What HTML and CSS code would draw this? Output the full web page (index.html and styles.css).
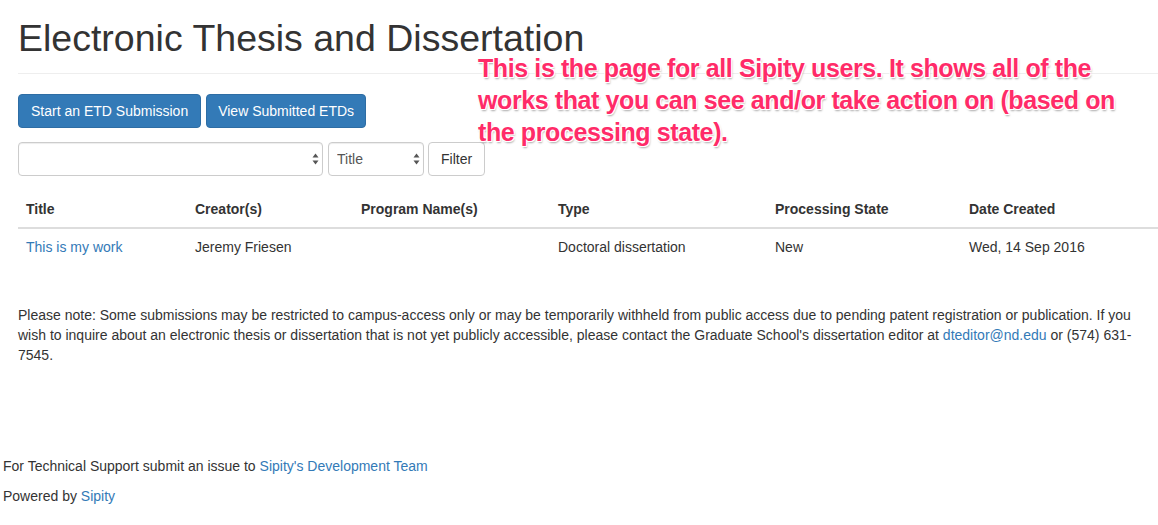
FILE: index.html
```html
<!DOCTYPE html>
<html lang="en">
<head>
<meta charset="utf-8">
<title>Electronic Thesis and Dissertation</title>
<link rel="stylesheet" href="styles.css">
</head>
<body>
<main class="container">
  <h1 class="page-title">Electronic Thesis and Dissertation</h1>
  <div class="actions">
    <a class="btn btn-primary" href="#">Start an ETD Submission</a>
    <a class="btn btn-primary btn-tight" href="#">View Submitted ETDs</a>
  </div>
  <form class="filter-form">
    <span class="select-wrap select-wide">
      <select class="form-control"><option></option></select>
      <svg class="select-arrows" width="7" height="12" viewBox="0 0 7 12"><path d="M3.5 0.5 L6.5 4.5 H0.5 Z M3.5 11.5 L6.5 7.5 H0.5 Z" fill="#555"/></svg>
    </span>
    <span class="select-wrap select-narrow">
      <select class="form-control"><option>Title</option></select>
      <svg class="select-arrows" width="7" height="12" viewBox="0 0 7 12"><path d="M3.5 0.5 L6.5 4.5 H0.5 Z M3.5 11.5 L6.5 7.5 H0.5 Z" fill="#555"/></svg>
    </span>
    <button type="button" class="btn btn-default">Filter</button>
  </form>
  <table class="table">
    <colgroup>
      <col class="c-title"><col class="c-creator"><col class="c-program"><col class="c-type"><col class="c-state"><col class="c-date">
    </colgroup>
    <thead>
      <tr><th>Title</th><th>Creator(s)</th><th>Program Name(s)</th><th>Type</th><th>Processing State</th><th>Date Created</th></tr>
    </thead>
    <tbody>
      <tr><td><a href="#">This is my work</a></td><td>Jeremy Friesen</td><td></td><td>Doctoral dissertation</td><td>New</td><td>Wed, 14 Sep 2016</td></tr>
    </tbody>
  </table>
  <p class="note">Please note: Some submissions may be restricted to campus-access only or may be temporarily withheld from public access due to pending patent registration or publication. If you wish to inquire about an electronic thesis or dissertation that is not yet publicly accessible, please contact the Graduate School's dissertation editor at <a href="#">dteditor@nd.edu</a> or (574) 631-7545.</p>
  <div class="annotation">This is the page for all Sipity users. It shows all of the works that you can see and/or take action on (based on the processing state).</div>
</main>
<footer class="footer">
  <p>For Technical Support submit an issue to <a href="#">Sipity's Development Team</a></p>
  <p>Powered by <a href="#">Sipity</a></p>
</footer>
</body>
</html>
```
FILE: styles.css
```css
* { box-sizing: border-box; }
html, body { margin: 0; padding: 0; }
body {
  font-family: "Liberation Sans", Arial, sans-serif;
  font-size: 14px;
  line-height: 20px;
  color: #333;
  background: #fff;
  width: 1158px;
  overflow: hidden;
}
a { color: #337ab7; text-decoration: none; }

.container {
  position: relative;
  padding: 0 0 0 18px;
}
.page-title {
  margin: 0;
  padding: 17px 0 14px;
  font-size: 37.5px;
  font-weight: 500;
  line-height: 42px;
  color: #333;
  border-bottom: 1px solid #eee;
}
.actions {
  display: flex;
  gap: 5px;
  margin-top: 20px;
}
.btn {
  display: inline-block;
  height: 34px;
  padding: 6px 12px;
  font-family: inherit;
  font-size: 14px;
  line-height: 20px;
  border: 1px solid transparent;
  border-radius: 4px;
  white-space: nowrap;
  cursor: pointer;
}
.btn-tight { padding: 6px 11px; }
.btn-primary {
  color: #fff;
  background: #337ab7;
  border-color: #2e6da4;
}
.btn-default {
  color: #333;
  background: #fff;
  border-color: #ccc;
}
.filter-form {
  display: flex;
  gap: 4px;
  margin-top: 14px;
}
.select-wrap {
  position: relative;
  display: block;
}
.select-wide { width: 305px; margin-right: 1px; }
.select-narrow { width: 96px; }
.form-control {
  display: block;
  width: 100%;
  height: 34px;
  padding: 6px 8px;
  font-family: inherit;
  font-size: 14px;
  color: #555;
  background: #fff;
  border: 1px solid #ccc;
  border-radius: 4px;
  -webkit-appearance: none;
  appearance: none;
  box-shadow: inset 0 1px 1px rgba(0,0,0,.075);
}
.select-arrows {
  position: absolute;
  right: 4px;
  top: 11px;
  pointer-events: none;
}
.table {
  width: 1140px;
  border-collapse: collapse;
  margin-top: 15px;
  margin-bottom: 20px;
}
.c-title { width: 169px; }
.c-creator { width: 166px; }
.c-program { width: 197px; }
.c-type { width: 217px; }
.c-state { width: 194px; }
.c-date { width: 197px; }
.table th, .table td {
  padding: 8px;
  text-align: left;
  vertical-align: bottom;
  line-height: 20px;
}
.table th {
  font-weight: bold;
  border-bottom: 2px solid #ddd;
}
.note {
  margin: 40px 0 0;
  width: 1132px;
}
.annotation {
  position: absolute;
  left: 478px;
  top: 52px;
  width: 660px;
  font-size: 25px;
  line-height: 32px;
  font-weight: bold;
  color: #ff2b68;
  letter-spacing: -0.4px;
  text-shadow: 0 0 1px #fff, 0 0 2px #fff, 1px 1px 0 #fff, -1px -1px 0 #fff, 1px -1px 0 #fff, -1px 1px 0 #fff, 1px 2px 2px rgba(0,0,0,.35);
}
.footer {
  margin-top: 91px;
  padding-left: 3px;
}
.footer p {
  margin: 0 0 10px;
}
```
